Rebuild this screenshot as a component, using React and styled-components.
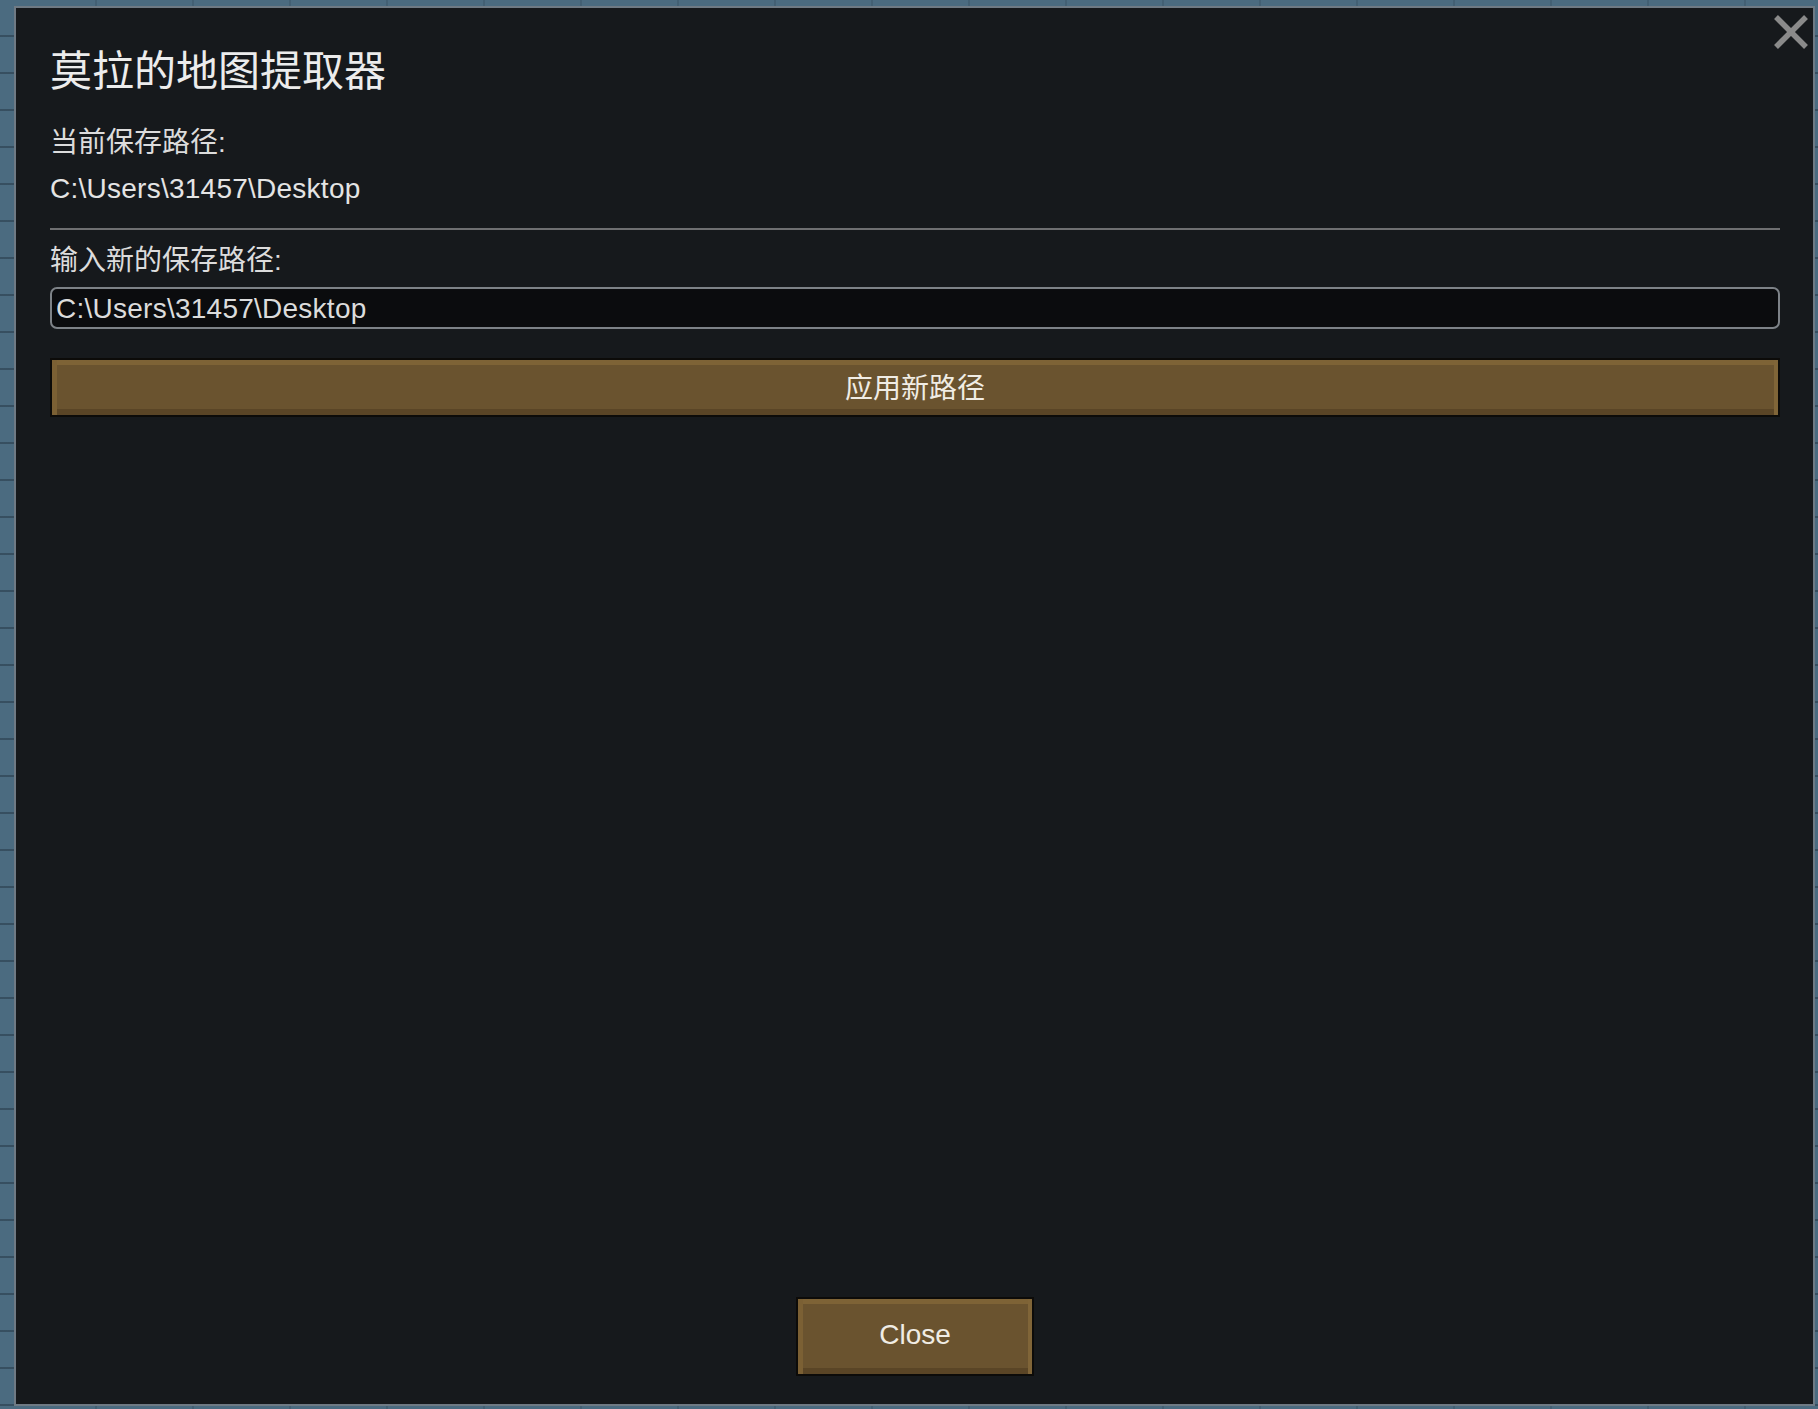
import React from 'react'
import styled, { createGlobalStyle } from 'styled-components'

const GlobalStyle = createGlobalStyle`
  html, body {
    margin: 0;
    padding: 0;
    background: #4a6a7f;
  }
  * {
    box-sizing: border-box;
  }
`

const Page = styled.div`
  width: 1818px;
  height: 1409px;
  padding: 6px 3px 3px 14px;
  background-color: #4b6b80;
  background-image:
    repeating-linear-gradient(
      to bottom,
      transparent 0px,
      transparent 35px,
      rgba(30, 45, 58, 0.45) 35px,
      rgba(30, 45, 58, 0.45) 37px
    ),
    repeating-linear-gradient(
      to right,
      transparent 0px,
      transparent 95px,
      rgba(30, 45, 58, 0.18) 95px,
      rgba(30, 45, 58, 0.18) 97px
    );
  font-family: 'Liberation Sans', 'Noto Sans CJK SC', sans-serif;
`

const Dialog = styled.div`
  position: relative;
  display: flex;
  flex-direction: column;
  width: 100%;
  height: 100%;
  background: #16191c;
  border: 2px solid #6f7a84;
  padding: 39px 33px 28px 34px;
`

const CloseX = styled.button`
  position: absolute;
  top: 6px;
  right: 4px;
  width: 36px;
  height: 36px;
  padding: 0;
  border: none;
  background: none;
  cursor: pointer;
  svg {
    display: block;
  }
`

const Title = styled.h1`
  margin: 0;
  font-size: 42px;
  line-height: 50px;
  font-weight: 400;
  color: #ececec;
`

const Label = styled.div`
  margin-top: ${({ $top }) => $top}px;
  font-size: 28px;
  line-height: 36px;
  color: #dcdcdc;
`

const PathText = styled.div`
  margin-top: 10px;
  font-size: 28px;
  line-height: 36px;
  letter-spacing: 0.25px;
  color: #e4e4e4;
`

const Divider = styled.hr`
  margin: 21px 0 0 0;
  border: none;
  height: 2px;
  background: #6e6f71;
`

const PathInput = styled.input`
  margin-top: 8px;
  width: 100%;
  height: 42px;
  padding: 2px 4px 0;
  background: #0b0c0e;
  border: 2px solid #7d8287;
  border-radius: 7px;
  color: #dcdcdc;
  font-family: inherit;
  font-size: 28px;
  letter-spacing: 0.25px;
  outline: none;
`

const BevelButton = styled.button`
  display: flex;
  align-items: center;
  justify-content: center;
  height: ${({ $h }) => $h}px;
  width: ${({ $w }) => ($w ? `${$w}px` : '100%')};
  margin-top: ${({ $top }) => $top || 0}px;
  align-self: ${({ $w }) => ($w ? 'center' : 'stretch')};
  padding: 0 0 4px 0;
  background: #6a532f;
  border: 2px solid #0c0b09;
  box-shadow:
    inset 5px 0 0 #7b6034,
    inset -4px 0 0 #806538,
    inset 0 5px 0 #7e6336,
    inset 0 -6px 0 #5a4526;
  color: #f0ece4;
  font-family: inherit;
  font-size: ${({ $fs }) => $fs}px;
  cursor: pointer;
`

const Spacer = styled.div`
  flex: 1;
`

const CloseIcon = () => (
  <svg width="36" height="36" viewBox="0 0 36 36">
    <path d="M3 3 L33 33 M33 3 L3 33" stroke="#8a8a8a" strokeWidth="5.5" strokeLinecap="butt" />
  </svg>
)

const App = () => {
  const currentPath = 'C:\\Users\\31457\\Desktop'
  return (
    <>
      <GlobalStyle />
      <Page>
        <Dialog>
          <CloseX aria-label="close">
            <CloseIcon />
          </CloseX>
          <Title>莫拉的地图提取器</Title>
          <Label $top={28}>当前保存路径:</Label>
          <PathText>{currentPath}</PathText>
          <Divider />
          <Label $top={13}>输入新的保存路径:</Label>
          <PathInput defaultValue={currentPath} />
          <BevelButton $h={59} $top={29} $fs={28}>应用新路径</BevelButton>
          <Spacer />
          <BevelButton $h={79} $w={238} $fs={28}>Close</BevelButton>
        </Dialog>
      </Page>
    </>
  )
}

export default App
